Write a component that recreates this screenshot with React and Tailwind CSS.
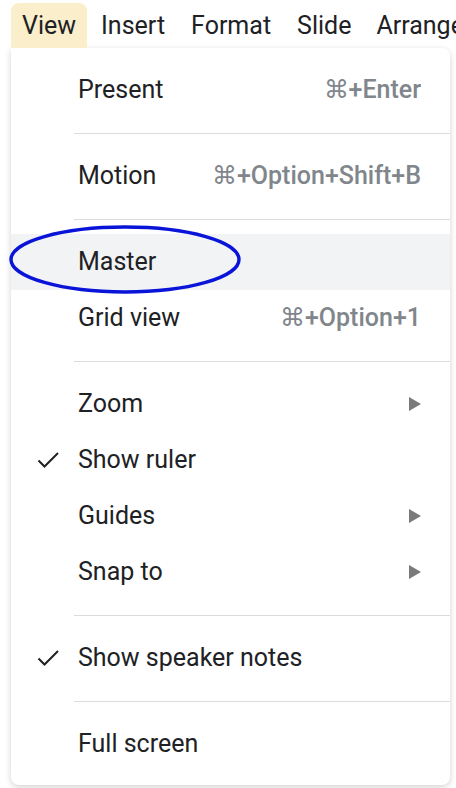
import React from "react";

function Check() {
  return (
    <svg width="24" height="18" viewBox="0 0 24 18" className="block">
      <polyline points="2.5,9.5 8.5,15.5 22,2" fill="none" stroke="#202124" strokeWidth="2" strokeLinecap="butt" strokeLinejoin="miter" />
    </svg>
  );
}

function Arrow() {
  return (
    <svg width="12" height="14" viewBox="0 0 12 14" className="block">
      <polygon points="0,0 12,7 0,14" fill="#7a7a7a" />
    </svg>
  );
}

function Row({ label, shortcut, check, arrow, active }) {
  return (
    <div className={"flex h-[56px] items-center pr-[29px] " + (active ? "bg-[#f1f3f4]" : "")}>
      <div className="flex w-[67px] shrink-0 items-center pl-[25px]">{check ? <Check /> : null}</div>
      <div className="flex-1 text-[25px] text-[#202124]">{label}</div>
      {shortcut ? <div className="text-[25px] font-medium text-[#80868b]">{shortcut}</div> : null}
      {arrow ? <Arrow /> : null}
    </div>
  );
}

function Sep() {
  return (
    <div className="flex h-[30px] items-center pl-[63px]">
      <div className="h-px flex-1 bg-[#dadce0]" />
    </div>
  );
}

export default function App() {
  return (
    <div className="relative h-[788px] w-[456px] overflow-hidden bg-white font-['Roboto',sans-serif]">
      <div className="flex h-[48px] items-end pl-[11px] text-[25px] text-[#202124]">
        <div className="flex h-[45px] items-center rounded-t-[8px] bg-[#faeecb] px-[11px]">View</div>
        <div className="flex h-[45px] items-center pl-[14px]">Insert</div>
        <div className="flex h-[45px] items-center pl-[26px]">Format</div>
        <div className="flex h-[45px] items-center pl-[26px]">Slide</div>
        <div className="flex h-[45px] items-center whitespace-nowrap pl-[25px]">Arrange</div>
      </div>
      <div className="ml-[11px] w-[439px] rounded-b-[8px] rounded-tr-[8px] bg-white pb-[13px] pt-[14px] shadow-[0_2px_6px_rgba(0,0,0,0.18)]">
        <Row label="Present" shortcut="⌘+Enter" />
        <Sep />
        <Row label="Motion" shortcut="⌘+Option+Shift+B" />
        <Sep />
        <Row label="Master" active />
        <Row label="Grid view" shortcut="⌘+Option+1" />
        <Sep />
        <Row label="Zoom" arrow />
        <Row label="Show ruler" check />
        <Row label="Guides" arrow />
        <Row label="Snap to" arrow />
        <Sep />
        <Row label="Show speaker notes" check />
        <Sep />
        <Row label="Full screen" />
      </div>
      <svg className="pointer-events-none absolute left-[9px] top-[224px]" width="234" height="72" viewBox="0 0 234 72">
        <ellipse cx="116" cy="35.5" rx="114" ry="32.5" fill="none" stroke="#0a14d8" strokeWidth="3.4" />
      </svg>
    </div>
  );
}
